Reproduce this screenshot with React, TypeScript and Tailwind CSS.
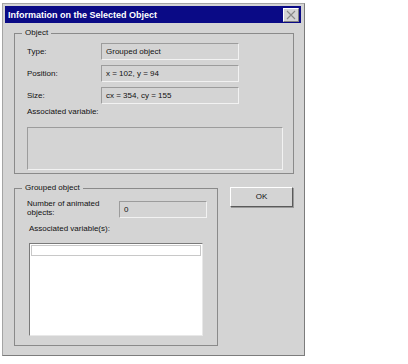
import React from 'react';

const font = { fontFamily: '"Liberation Sans", Arial, sans-serif' };

const Field = ({ children, className = '' }: { children?: React.ReactNode; className?: string }) => (
  <div
    className={`h-[17px] border border-t-[#9c9c9c] border-l-[#9c9c9c] border-b-[#f2f2f2] border-r-[#f2f2f2] bg-[#d4d4d4] pl-[4px] text-[8px] leading-[15px] text-[#111] ${className}`}
  >
    {children}
  </div>
);

const Row = ({ label, value }: { label: string; value: string }) => (
  <div className="flex items-center">
    <span className="w-[74px] text-[8px] leading-[10px] text-[#111]">{label}</span>
    <Field className="w-[138px]">{value}</Field>
  </div>
);

export default function App() {
  return (
    <div className="h-[364px] w-[408px] bg-white pl-[2px] pt-[3px]" style={font}>
      <div className="h-[353px] w-[303px] border border-[#a4a4a4] border-r-[#7c7c7c] border-b-[#7c7c7c] bg-[#d4d4d4] p-[2px]">
        {/* title bar */}
        <div className="flex h-[17px] w-[296px] items-center justify-between bg-[#0a0a86] pl-[3px] pr-[2px]">
          <span className="text-[9px] font-bold leading-[10px] text-white">Information on the Selected Object</span>
          <div className="flex h-[14px] w-[16px] items-center justify-center border border-t-white border-l-white border-b-[#808080] border-r-[#808080] bg-[#d4d4d4]">
            <svg width="10" height="10" viewBox="0 0 10 10">
              <path d="M1 1 L9 9 M9 1 L1 9" stroke="#8a8a8a" strokeWidth="1.1" />
            </svg>
          </div>
        </div>

        {/* Object group */}
        <fieldset className="ml-[9px] mt-[5px] w-[280px] border border-[#8a8a8a] pb-[3px] pl-[12px] pt-[5px]">
          <legend className="-ml-[5px] px-[3px] text-[8px] leading-[10px] text-[#111]">Object</legend>
          <div className="flex flex-col gap-[5px]">
            <Row label="Type:" value="Grouped object" />
            <Row label="Position:" value="x = 102, y = 94" />
            <Row label="Size:" value="cx = 354, cy = 155" />
          </div>
          <div className="mt-[3px] text-[8px] leading-[10px] text-[#111]">Associated variable:</div>
          <div className="mt-[10px] h-[43px] w-[256px] border border-t-[#9c9c9c] border-l-[#9c9c9c] border-b-[#f2f2f2] border-r-[#f2f2f2]" />
        </fieldset>

        {/* bottom row */}
        <div className="mt-[9px] flex items-start">
          <fieldset className="ml-[9px] h-[163px] w-[204px] border border-[#8a8a8a] pl-[12px] pt-[6px]">
            <legend className="-ml-[5px] px-[3px] text-[8px] leading-[10px] text-[#111]">Grouped object</legend>
            <div className="flex items-start">
              <span className="w-[92px] text-[8px] leading-[9px] text-[#111]">
                Number of animated
                <br />
                objects:
              </span>
              <Field className="mt-[2px] w-[88px]">0</Field>
            </div>
            <div className="ml-[2px] mt-[6px] text-[8px] leading-[10px] text-[#111]">Associated variable(s):</div>
            <div className="ml-[2px] mt-[9px] h-[93px] w-[174px] border border-t-[#7a7a7a] border-l-[#7a7a7a] border-b-[#e8e8e8] border-r-[#e8e8e8] bg-white p-[1px]">
              <div className="h-[11px] w-full border border-[#c8c8c8]" />
            </div>
          </fieldset>
          <button className="ml-[12px] mt-[4px] h-[20px] w-[63px] border border-t-white border-l-white border-b-[#5a5a5a] border-r-[#5a5a5a] bg-[#d4d4d4] text-[8px] leading-[10px] text-[#111] shadow-[1px_1px_0_#9a9a9a]">
            OK
          </button>
        </div>
      </div>
    </div>
  );
}
